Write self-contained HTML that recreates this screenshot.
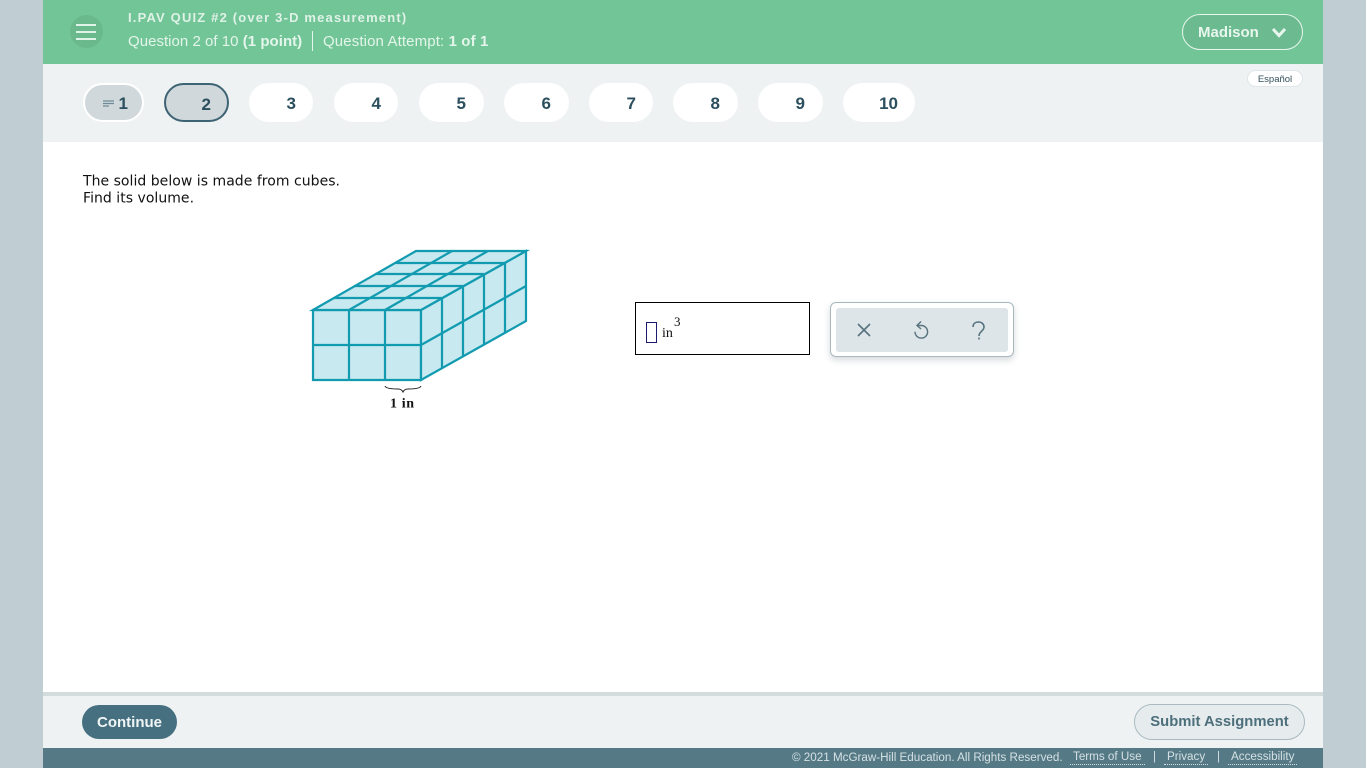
<!DOCTYPE html>
<html><head><meta charset="utf-8"><style>
html,body{margin:0;padding:0;width:1366px;height:768px;overflow:hidden;background:#c0cdd3;font-family:"Liberation Sans",sans-serif}
.a{position:absolute;white-space:nowrap}
.pill{position:absolute;top:83px;height:39px;background:#fff;border-radius:20px;box-sizing:border-box;color:#2b4f5e;font-weight:bold;font-size:17px;line-height:42px;text-align:right}
</style></head><body>
<div class="a" style="left:43px;top:0;width:1280px;height:768px;background:#fff"></div>
<div class="a" style="left:43px;top:0;width:1280px;height:64px;background:#72c596"></div>
<div class="a" style="left:43px;top:64px;width:1280px;height:78px;background:#eef2f3"></div>
<div class="a" style="left:70px;top:15px;width:33px;height:33px;border-radius:50%;background:#69b98d"></div>
<svg class="a" style="left:70px;top:16px" width="33" height="33"><path d="M6 9H26M6 16H26M6 23H26" stroke="#e0f3e8" stroke-width="2" fill="none"/></svg>
<div class="a" style="left:128px;top:10px;font-size:13px;line-height:16px;font-weight:bold;color:#dff2e7;letter-spacing:1.17px">I.PAV QUIZ #2 (over 3-D measurement)</div>
<div class="a" style="left:128px;top:32px;font-size:15px;line-height:20px;color:#e4f5eb;letter-spacing:.03px">Question 2 of 10 <b>(1 point)</b></div>
<div class="a" style="left:312px;top:31px;width:1px;height:20px;background:#e4f5eb"></div>
<div class="a" style="left:323px;top:32px;font-size:15px;line-height:20px;color:#e4f5eb;letter-spacing:.12px">Question Attempt: <b>1 of 1</b></div>
<div class="a" style="left:1182px;top:14px;width:121px;height:36px;box-sizing:border-box;border:1px solid #e8f6ee;border-radius:18px;background:#6cbb90"></div>
<div class="a" style="left:1198px;top:24px;font-size:15px;line-height:18px;font-weight:bold;color:#e8f6ee">Madison</div>
<svg class="a" style="left:1271px;top:26px" width="16" height="12"><path d="M2 3L8 9.500L14 3" stroke="#e8f6ee" stroke-width="3" fill="none"/></svg>
<div class="a" style="left:1247px;top:70px;width:56px;height:17px;box-sizing:border-box;border:1px solid #dfe5e8;border-radius:9px;background:#fff;font-size:9.5px;line-height:17px;text-align:center;color:#33505c">Español</div>

<div class="pill" style="left:83px;width:61px;background:#d0d8dc;border:2px solid #fff;padding-right:14px;line-height:38px">1</div>
<svg class="a" style="left:102px;top:99px" width="13" height="10"><path d="M1 2H12M1 4.500H12M1 7H7" stroke="#6f8a96" stroke-width="1.2" fill="none"/></svg>
<div class="pill" style="left:164px;width:65px;background:#d0d8dc;border:2px solid #3e6474;padding-right:16px;line-height:39px">2</div>
<div class="pill" style="left:249px;width:64px;padding-right:17px">3</div>
<div class="pill" style="left:334px;width:64px;padding-right:17px">4</div>
<div class="pill" style="left:419px;width:65px;padding-right:18px">5</div>
<div class="pill" style="left:504px;width:65px;padding-right:18px">6</div>
<div class="pill" style="left:589px;width:64px;padding-right:17px">7</div>
<div class="pill" style="left:673px;width:65px;padding-right:18px">8</div>
<div class="pill" style="left:758px;width:65px;padding-right:18px">9</div>
<div class="pill" style="left:843px;width:72px;padding-right:17px">10</div>

<div class="a" style="left:83px;top:173px;font-family:'DejaVu Sans',sans-serif;font-size:14px;line-height:17px;color:#111;letter-spacing:.03px;transform:translateY(.6px)">The solid below is made from cubes.<br>Find its volume.</div>

<svg class="a" style="left:300px;top:240px" width="240" height="180">
<g transform="translate(-300,-240)" fill="none" stroke="#129bb0" stroke-width="2.2">
<path d="M313 310H421V380H313Z" fill="#c7e9ef"/>
<path d="M421 310L526 251V321L421 380Z" fill="#c7e9ef"/>
<path d="M313 310L416 251H526L421 310Z" fill="#c7e9ef"/>
<path d="M349 310V380M385 310V380M313 345H421"/>
<path d="M442 298V368M463 286V356M484 274V344M505 263V333M421 345L526 286"/>
<path d="M349 310L452 251M385 310L488 251"/>
<path d="M334 298H442M354 286H463M375 274H484M396 263H505"/>
</g>
<path d="M85 146C86 149 95 149 98 149C100 149 102 150 103 152C104 150 106 149 108 149C111 149 120 149 121 146" fill="none" stroke="#222" stroke-width="1"/>
<text x="90" y="167.500" font-family="'Liberation Serif',serif" font-weight="bold" font-size="14" letter-spacing=".6" fill="#111">1 in</text>
</svg>

<div class="a" style="left:635px;top:302px;width:175px;height:53px;box-sizing:border-box;border:1px solid #000;background:#fff"></div>
<div class="a" style="left:646px;top:322px;width:11px;height:21px;box-sizing:border-box;border:1px solid #1a1a6e"></div>
<div class="a" style="left:662px;top:326px;font-family:'Liberation Serif',serif;font-size:14px;line-height:16px;color:#111">in</div>
<div class="a" style="left:674px;top:314px;font-family:'Liberation Serif',serif;font-size:13px;line-height:16px;color:#111">3</div>

<div class="a" style="left:830px;top:302px;width:184px;height:55px;box-sizing:border-box;border:1px solid #a9b8bf;border-radius:6px;background:#fff;box-shadow:0 3px 7px rgba(60,80,90,.22)"></div>
<div class="a" style="left:836px;top:308px;width:172px;height:44px;border-radius:3px;background:#dee5e8"></div>
<svg class="a" style="left:850px;top:316px" width="145" height="30" fill="none" stroke="#56737f" stroke-width="1.6">
<path d="M8 8L20 20M20 8L8 20"/>
<path d="M68 9.500H71.500A6.300 6.300 0 1 1 65 15.800M71 5.500L67 9.500L71 13" stroke-width="1.4"/>
<path d="M123 11C123 7.500 125.500 6 128.500 6C131.500 6 134 8 134 11C134 15 129 15.500 129 20"/>
<path d="M129 21.500V23.500"/>
</svg>

<div class="a" style="left:43px;top:692px;width:1280px;height:4px;background:#d2dcdd"></div>
<div class="a" style="left:43px;top:696px;width:1280px;height:52px;background:#eef2f3"></div>
<div class="a" style="left:82px;top:705px;width:95px;height:34px;border-radius:17px;background:#46707f;color:#f0f5f6;font-weight:bold;font-size:15px;line-height:35px;text-align:center">Continue</div>
<div class="a" style="left:1134px;top:704px;width:171px;height:36px;box-sizing:border-box;border:1px solid #a9bac1;border-radius:18px;background:#e6ecee;color:#4d6f7c;font-weight:bold;font-size:14.800px;line-height:35px;text-align:center">Submit Assignment</div>
<div class="a" style="left:43px;top:748px;width:1280px;height:20px;background:#557a86"></div>
<div class="a" style="left:792px;top:751px;font-size:11.650px;line-height:14px;color:#d5e0e4">© 2021 McGraw-Hill Education. All Rights Reserved.</div>
<div class="a" style="left:1070px;top:750px;padding:0 3px;font-size:11.650px;line-height:14px;color:#d5e0e4;border-bottom:1px dotted #d5e0e4">Terms of Use</div>
<div class="a" style="left:1153px;top:750px;font-size:11.650px;line-height:14px;color:#d5e0e4">|</div>
<div class="a" style="left:1164px;top:750px;padding:0 3px;font-size:11.650px;line-height:14px;color:#d5e0e4;border-bottom:1px dotted #d5e0e4">Privacy</div>
<div class="a" style="left:1217px;top:750px;font-size:11.650px;line-height:14px;color:#d5e0e4">|</div>
<div class="a" style="left:1228px;top:750px;padding:0 3px;font-size:11.650px;line-height:14px;color:#d5e0e4;border-bottom:1px dotted #d5e0e4">Accessibility</div>
</body></html>
